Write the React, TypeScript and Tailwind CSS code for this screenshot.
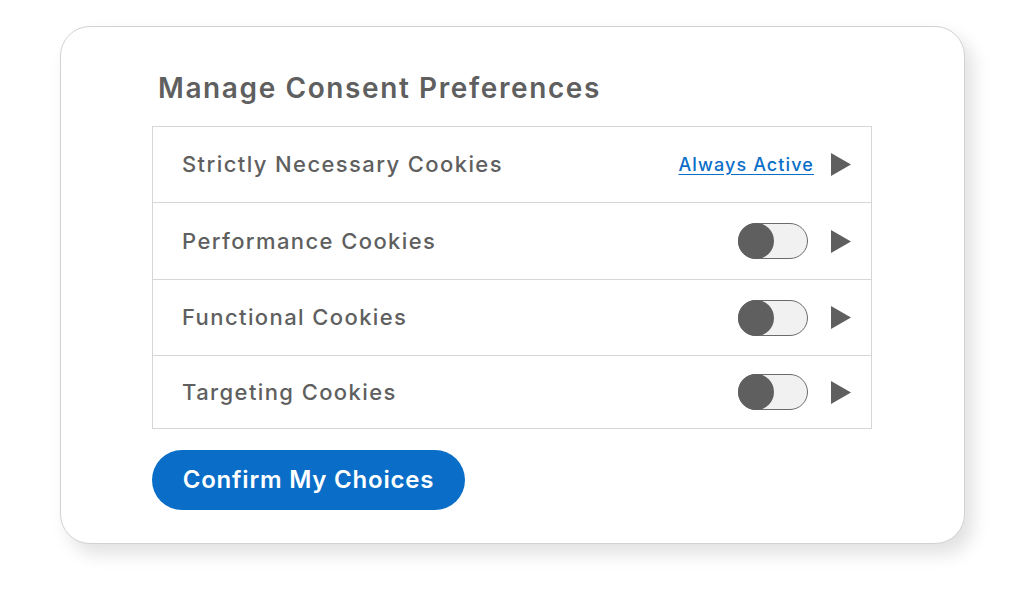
import React from "react";

const font = { fontFamily: "Inter, 'Open Sans', sans-serif" };

function Triangle() {
  return (
    <svg width="20" height="23" viewBox="0 0 20 23" className="shrink-0">
      <polygon points="0,0 20,11.5 0,23" fill="#5f5f5f" />
    </svg>
  );
}

function Toggle() {
  return (
    <div className="relative w-[70px] h-[36px] rounded-full border border-[#6b6b6b] bg-[#f1f1f1] shrink-0">
      <div className="absolute left-[-1px] top-[-1px] w-[36px] h-[36px] rounded-full bg-[#5f5f5f]" />
    </div>
  );
}

function Row({ label, right, h, last }: { label: string; right: React.ReactNode; h: string; last?: boolean }) {
  return (
    <div className={`flex items-center pl-[29px] pr-[20px] ${h} ${last ? "" : "border-b border-[#d6d6d6]"}`}>
      <div className="flex-1 text-[22px] text-[#5f5f5f] font-medium tracking-[1.4px]">{label}</div>
      <div className="flex items-center gap-[23px]">{right}</div>
    </div>
  );
}

export default function App() {
  return (
    <div className="w-[1024px] h-[599px] bg-white" style={font}>
      <div className="pt-[26px] pl-[60px]">
        <div className="w-[905px] h-[518px] rounded-[30px] border border-[#d2d2d2] bg-white shadow-[8px_10px_18px_rgba(0,0,0,0.12)] pl-[91px] pt-[43px]">
          <h1 className="pl-[6px] text-[28px] font-semibold text-[#5f5f5f] leading-[36px] tracking-[1.6px]">Manage Consent Preferences</h1>
          <div className="mt-[20px] w-[720px] border border-[#d6d6d6]">
            <Row
              label="Strictly Necessary Cookies"
              h="h-[76px]"
              right={
                <>
                  <a className="text-[18px] font-medium text-[#0a6ec8] underline underline-offset-[3px] mr-[-6px] tracking-[1.1px]">Always Active</a>
                  <Triangle />
                </>
              }
            />
            <Row label="Performance Cookies" h="h-[77px]" right={<><Toggle /><Triangle /></>} />
            <Row label="Functional Cookies" h="h-[76px]" right={<><Toggle /><Triangle /></>} />
            <Row label="Targeting Cookies" h="h-[72px]" right={<><Toggle /><Triangle /></>} last />
          </div>
          <button className="mt-[21px] w-[313px] h-[60px] rounded-full bg-[#0a6ec8] text-white text-[24px] font-semibold tracking-[0.8px]">
            Confirm My Choices
          </button>
        </div>
      </div>
    </div>
  );
}
